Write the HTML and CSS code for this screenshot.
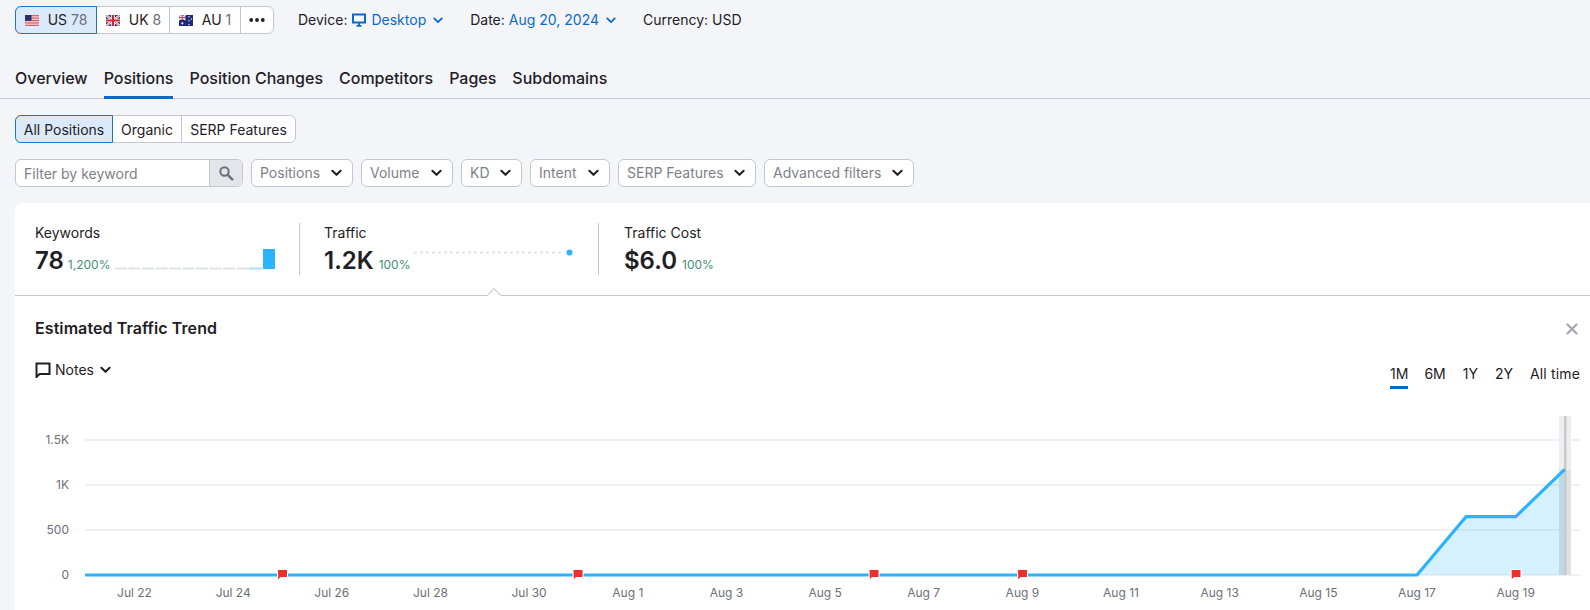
FILE: index.html
```html
<!DOCTYPE html>
<html lang="en">
<head>
<meta charset="utf-8">
<title>Positions</title>
<link rel="stylesheet" href="styles.css">
</head>
<body>
<svg class="defs" width="0" height="0" aria-hidden="true">
  <defs>
    <symbol id="chev" viewBox="0 0 12 8"><path d="M1.500 1.500 6 6l4.500-4.500" fill="none" stroke="currentColor" stroke-width="2.200" stroke-linecap="round" stroke-linejoin="round"/></symbol>
    <symbol id="flag" viewBox="0 0 12 13"><path d="M1 1.500h10v8H4L1.300 12.200z" fill="#f02d2d" stroke="#fff" stroke-width="1"/></symbol>
  </defs>
</svg>
<header class="top">
  <div class="seg seg-db">
    <button class="seg-item active">
      <svg class="fl" viewBox="0 0 14 11"><rect width="14" height="11" fill="#fff"/><path d="M0 .4h14M0 2.100h14M0 3.800h14M0 5.500h14M0 7.200h14M0 8.900h14M0 10.600h14" stroke="#c8323c" stroke-width=".85"/><rect width="6.500" height="5.800" fill="#28306e"/></svg>
      <span>US <i>78</i></span>
    </button>
    <button class="seg-item">
      <svg class="fl" viewBox="0 0 14 11"><rect width="14" height="11" fill="#23307a"/><path d="M0 0l14 11M14 0 0 11" stroke="#fff" stroke-width="2.200"/><path d="M0 0l14 11M14 0 0 11" stroke="#d3202e" stroke-width=".7"/><path d="M7 0v11M0 5.500h14" stroke="#fff" stroke-width="3.600"/><path d="M7 0v11M0 5.500h14" stroke="#d3202e" stroke-width="2"/></svg>
      <span>UK <i>8</i></span>
    </button>
    <button class="seg-item">
      <svg class="fl" viewBox="0 0 14 11"><rect width="14" height="11" fill="#1b2a72"/><path d="M0 0l6.500 5M6.500 0 0 5" stroke="#fff" stroke-width="1.200"/><path d="M3.250 0v5M0 2.500h6.500" stroke="#fff" stroke-width="1.800"/><path d="M3.250 0v5M0 2.500h6.500" stroke="#d3202e" stroke-width=".9"/><g fill="#fff"><circle cx="3.300" cy="8.300" r="1.100"/><circle cx="10" cy="1.800" r=".7"/><circle cx="12.300" cy="4" r=".7"/><circle cx="10" cy="5.800" r=".7"/><circle cx="10" cy="9.400" r=".7"/></g></svg>
      <span>AU <i>1</i></span>
    </button>
    <button class="seg-item more" aria-label="More"><svg width="16" height="4" viewBox="0 0 16 4"><g fill="#1f2026"><circle cx="2.200" cy="2" r="1.900"/><circle cx="8" cy="2" r="1.900"/><circle cx="13.800" cy="2" r="1.900"/></g></svg></button>
  </div>
  <div class="meta meta-device"><span>Device:</span><svg class="mon" width="14" height="14" viewBox="0 0 14 14"><path d="M1 1.500h12v8H1z" fill="none" stroke="#0a6ac9" stroke-width="2"/><path d="M4.500 12.800h5M7 10v3" stroke="#0a6ac9" stroke-width="1.800"/></svg><a class="link">Desktop</a><svg class="chev-b"><use href="#chev"/></svg></div>
  <div class="meta meta-date"><span>Date:</span><a class="link gap">Aug 20, 2024</a><svg class="chev-b"><use href="#chev"/></svg></div>
  <div class="meta meta-cur"><span>Currency: USD</span></div>
</header>
<nav class="tabs">
  <a class="tab">Overview</a>
  <a class="tab on">Positions</a>
  <a class="tab">Position Changes</a>
  <a class="tab">Competitors</a>
  <a class="tab">Pages</a>
  <a class="tab">Subdomains</a>
</nav>
<div class="seg seg-kind">
  <button class="seg-item active s1">All Positions</button>
  <button class="seg-item s2">Organic</button>
  <button class="seg-item s3">SERP Features</button>
</div>
<div class="filters">
  <div class="search">
    <span class="ph">Filter by keyword</span>
    <span class="sbtn"><svg width="16" height="16" viewBox="0 0 16 16"><circle cx="6.500" cy="6.500" r="4.200" fill="none" stroke="#6c6e79" stroke-width="2"/><path d="M9.800 9.800 14.300 14.300" stroke="#6c6e79" stroke-width="2.400" stroke-linecap="round"/></svg></span>
  </div>
  <button class="sel w-pos">Positions<svg class="chev-d"><use href="#chev"/></svg></button>
  <button class="sel w-vol">Volume<svg class="chev-d"><use href="#chev"/></svg></button>
  <button class="sel w-kd">KD<svg class="chev-d"><use href="#chev"/></svg></button>
  <button class="sel w-int">Intent<svg class="chev-d"><use href="#chev"/></svg></button>
  <button class="sel w-serp">SERP Features<svg class="chev-d"><use href="#chev"/></svg></button>
  <button class="sel w-adv">Advanced filters<svg class="chev-d"><use href="#chev"/></svg></button>
</div>
<main class="card">
  <section class="metrics">
    <div class="metric m1">
      <div class="m-label">Keywords</div>
      <div class="m-row"><strong>78</strong><em>1,200%</em>
        <svg class="spark s-bars" width="161" height="22" viewBox="0 0 161 22">
          <path d="M0 20.500h134" stroke="#e0e1e9" stroke-width="2" stroke-dasharray="12 1.500"/>
          <rect x="134" y="19.500" width="13" height="2" fill="#a8ddff"/>
          <rect x="148" y="1" width="12" height="20" fill="#2bb3ff"/>
        </svg>
      </div>
    </div>
    <div class="metric m2">
      <div class="m-label">Traffic</div>
      <div class="m-row"><strong>1.2K</strong><em>100%</em>
        <svg class="spark s-line" width="162" height="22" viewBox="0 0 162 22">
          <path d="M0 5.500h148" stroke="#e3e4ea" stroke-width="2" stroke-dasharray="3 3"/>
          <circle cx="155.500" cy="5.500" r="3" fill="#2bb3ff"/>
        </svg>
      </div>
    </div>
    <div class="metric m3">
      <div class="m-label">Traffic Cost</div>
      <div class="m-row"><strong>$6.0</strong><em>100%</em></div>
    </div>
    <span class="caret"></span>
  </section>
  <section class="trend">
    <div class="trend-head">
      <h2>Estimated Traffic Trend</h2>
      <svg class="close" width="12" height="12" viewBox="0 0 12 12"><path d="M1.500 1.500l9 9M10.500 1.500l-9 9" stroke="#a4a6b2" stroke-width="2.200" stroke-linecap="round"/></svg>
    </div>
    <div class="trend-tools">
      <div class="notes">
        <svg width="16" height="16" viewBox="0 0 16 16"><path d="M1.500 1.500h13v10.500H4.600L1.500 15z" fill="none" stroke="#1f2026" stroke-width="2" stroke-linejoin="miter"/></svg>
        <span>Notes</span><svg class="chev-d"><use href="#chev"/></svg>
      </div>
      <div class="ranges">
        <a class="range on">1M</a><a class="range">6M</a><a class="range">1Y</a><a class="range">2Y</a><a class="range">All time</a>
      </div>
    </div>
    <svg class="chart" width="1575" height="199" viewBox="15 411 1575 199">
      <rect x="1559" y="416" width="12" height="159" fill="#eceef0"/>
      <g class="grid">
        <path d="M85 440H1580M85 485H1580M85 530H1580M85 575H1580"/>
      </g>
      <g class="ylab">
        <text x="69" y="443.500">1.5K</text>
        <text x="69" y="488.500">1K</text>
        <text x="69" y="533.500">500</text>
        <text x="69" y="578.500">0</text>
      </g>
      <path d="M85 575H1417L1466 516.700H1515.700L1564.700 469.300V575H85Z" fill="#2bb3ff" fill-opacity=".2"/>
      <rect x="1559" y="470" width="12" height="105" fill="#aab4bb" fill-opacity=".22"/>
      <rect x="1564" y="416" width="2.500" height="159" fill="#c6cacd"/>
      <path d="M85 575H1417L1466 516.700H1515.700L1564.700 469.300" fill="none" stroke="#2bb3ff" stroke-width="3.200" stroke-linejoin="round"/>
      <g class="xlab">
        <text x="134.500" y="597">Jul 22</text>
        <text x="233.200" y="597">Jul 24</text>
        <text x="331.800" y="597">Jul 26</text>
        <text x="430.500" y="597">Jul 28</text>
        <text x="529.100" y="597">Jul 30</text>
        <text x="627.800" y="597">Aug 1</text>
        <text x="726.400" y="597">Aug 3</text>
        <text x="825.100" y="597">Aug 5</text>
        <text x="923.700" y="597">Aug 7</text>
        <text x="1022.400" y="597">Aug 9</text>
        <text x="1121" y="597">Aug 11</text>
        <text x="1219.700" y="597">Aug 13</text>
        <text x="1318.300" y="597">Aug 15</text>
        <text x="1417" y="597">Aug 17</text>
        <text x="1515.700" y="597">Aug 19</text>
      </g>
      <use href="#flag" x="276.500" y="568" width="12" height="13"/>
      <use href="#flag" x="572" y="568" width="12" height="13"/>
      <use href="#flag" x="868" y="568" width="12" height="13"/>
      <use href="#flag" x="1016.500" y="568" width="12" height="13"/>
      <use href="#flag" x="1510" y="568" width="12" height="13"/>
    </svg>
  </section>
</main>
</body>
</html>
```
FILE: styles.css
```css
* { box-sizing: border-box; }
html, body { margin: 0; height: 610px; overflow: hidden; }
body { background: #f4f5f9; color: #1f2026; font: 400 14px/20px Inter, "Liberation Sans", sans-serif; padding-top: 6px; }
button { font: inherit; color: inherit; background: none; border: 0; padding: 0; }
.defs { position: absolute; }
.top { display: flex; align-items: center; height: 28px; margin-left: 15px; }
.seg { display: flex; background: #fff; border: 1px solid #c4c7cf; border-radius: 6px; height: 28px; }
.seg-item { display: flex; align-items: center; justify-content: center; height: 26px; border-left: 1px solid #c4c7cf; white-space: nowrap; }
.seg-item:first-child { border-left: 0; }
.seg-item.active { background: #dbeafa; outline: 1px solid #1a76cc; border-radius: 5px 0 0 5px; z-index: 1; position: relative; }
.seg-db { width: 259px; }
.seg-db .seg-item { gap: 9px; }
.seg-db .seg-item:nth-child(1) { width: 80px; }
.seg-db .seg-item:nth-child(2) { width: 73px; padding-left: 1px; }
.seg-db .seg-item:nth-child(3) { width: 71px; }
.seg-db .seg-item.more { width: 33px; }
.fl { width: 14px; height: 11px; flex: none; }
.seg-item i { font-style: normal; color: #6c6e79; }
.meta { display: flex; align-items: center; white-space: pre; }
.meta-device { margin-left: 24px; }
.mon { margin: 0 5px 0 5px; }
.link { color: #0a6ac9; }
.link.gap { margin-left: 4px; }
.chev-b { width: 10px; height: 7px; margin-left: 7px; color: #0a6ac9; }
.chev-d { width: 11px; height: 8px; color: #1f2026; }
.meta-date { margin-left: 27px; }
.meta-cur { margin-left: 27px; }
.tabs { display: flex; gap: 16px; height: 65px; padding: 0 15px; border-bottom: 1px solid #c4c7cf; align-items: flex-end; }
.tab { font-size: 16px; font-weight: 500; line-height: 22px; padding: 1px 0 8px; height: 32px; }
.tab.on { border-bottom: 3px solid #0a6ac9; height: 33px; margin-bottom: -1px; }
.seg-kind { width: 281px; margin: 16px 0 0 15px; }
.seg-kind .seg-item { padding-top: 1px; }
.s1 { width: 96px; }
.s2 { width: 69px; }
.s3 { width: 114px; }
.filters { display: flex; gap: 8px; margin: 16px 0 0 15px; height: 28px; }
.search { display: flex; width: 228px; background: #fff; border: 1px solid #c4c7cf; border-radius: 6px; overflow: hidden; }
.ph { flex: 1; padding: 1px 0 0 8px; line-height: 26px; color: #7d7f8a; }
.sbtn { display: flex; align-items: center; justify-content: center; width: 33px; background: #e4e5ea; border-left: 1px solid #c4c7cf; }
.sel { display: flex; align-items: center; justify-content: space-between; padding: 0 10px 0 8px; background: #fff; border: 1px solid #c4c7cf; border-radius: 6px; color: #7d7f8a; }
.w-pos { width: 102px; }
.w-vol { width: 92px; }
.w-kd { width: 61px; }
.w-int { width: 80px; }
.w-serp { width: 138px; }
.w-adv { width: 150px; }
.card { margin: 16px 0 0 15px; background: #fff; border-radius: 8px 0 0 0; height: 407px; }
.metrics { position: relative; display: flex; height: 93px; border-bottom: 1px solid #c4c7cf; padding-top: 20px; }
.metric { height: 52px; }
.m1 { width: 285px; padding-left: 20px; border-right: 1px solid #c4c7cf; }
.m2 { width: 299px; padding-left: 24px; border-right: 1px solid #c4c7cf; }
.m3 { padding-left: 25px; }
.m-label { line-height: 20px; }
.m-row { display: flex; align-items: baseline; margin-top: 3px; height: 29px; position: relative; }
.m-row strong { font-size: 24px; line-height: 30px; font-weight: 600; }
.m-row em { font-style: normal; font-size: 12px; color: #3e8f79; margin-left: 5px; }
.m1 em { margin-left: 4px; }
.spark { position: absolute; }
.s-bars { left: 80px; top: 2px; }
.s-line { left: 90px; top: 1px; }
.caret { position: absolute; left: 473.500px; top: 87px; width: 10px; height: 10px; background: #fff; border: 1px solid #c4c7cf; border-width: 1px 0 0 1px; transform: rotate(45deg); }
.trend { position: relative; }
.trend-head { display: flex; justify-content: space-between; align-items: center; padding: 13px 12px 0 20px; height: 50px; }
.trend-head h2 { margin: 0; font-size: 16px; line-height: 20px; font-weight: 600; letter-spacing: .08px; }
.close { margin-top: 2px; }
.trend-tools { display: flex; justify-content: space-between; padding: 12px 10px 0 20px; height: 65px; }
.notes { display: flex; align-items: center; height: 20px; gap: 4px; margin-top: 2px; }
.notes .chev-d { margin-left: 2px; }
.ranges { display: flex; gap: 17px; }
.range { height: 31px; padding-top: 6px; }
.range:first-child { margin-right: -1px; }
.range:last-child { letter-spacing: .15px; }
.range.on { border-bottom: 3px solid #0a6ac9; }
.chart { display: block; }
.grid path { stroke: #eff0f4; stroke-width: 2; fill: none; }
.ylab text { font-size: 12px; fill: #6c6e79; text-anchor: end; }
.xlab text { font-size: 12px; fill: #6c6e79; text-anchor: middle; }
```
